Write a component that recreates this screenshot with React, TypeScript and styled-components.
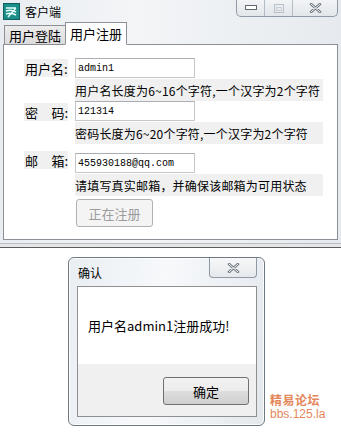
import React from 'react'
import styled, {createGlobalStyle} from 'styled-components'

const GlobalStyle = createGlobalStyle`
    html, body {
        margin: 0;
        padding: 0;
        background: #ffffff;
    }
    body {
        width: 341px;
        height: 432px;
        overflow: hidden;
        font-family: "Noto Sans CJK SC", "Liberation Sans", sans-serif;
        color: #000;
    }
`

const Page = styled.div`
    position: relative;
    width: 341px;
    height: 432px;
    background: #ffffff;
`

const Window = styled.div`
    height: 243px;
    background: linear-gradient(90deg, #e9edf1 0%, #f3f5f7 40%, #e6eaee 100%);
    border-bottom: 1px solid #b9bcc0;
    display: flex;
    flex-direction: column;
`

const TitleBar = styled.div`
    height: 22px;
    display: flex;
    align-items: center;
    padding-left: 3px;
    gap: 5px;
    font-size: 12px;
`

const TitleText = styled.span`
    line-height: 1;
    margin-top: 2px;
`

const CaptionGroup = styled.div`
    margin-left: auto;
    margin-right: 3px;
    align-self: flex-start;
    display: flex;
    height: 16px;
    border: 1px solid #8f9aa6;
    border-top: none;
    border-radius: 0 0 5px 5px;
    overflow: hidden;
    background: linear-gradient(#f2f4f6, #e2e6ea);
`

const CaptionButton = styled.div<{w: number}>`
    width: ${p => p.w}px;
    display: flex;
    align-items: center;
    justify-content: center;
    & + & {
        border-left: 1px solid #b4bcc5;
    }
`

const TabStrip = styled.div`
    display: flex;
    align-items: flex-end;
    padding-left: 4px;
    height: 22px;
`

const Tab = styled.div<{active?: boolean}>`
    height: ${p => (p.active ? 21 : 18)}px;
    padding: 0 4px;
    display: flex;
    align-items: center;
    font-size: 13px;
    border: 1px solid #8c8f96;
    border-bottom: ${p => (p.active ? '1px solid #fff' : 'none')};
    background: ${p => (p.active ? '#ffffff' : 'linear-gradient(#ececec, #dcdcdc)')};
    margin-bottom: ${p => (p.active ? -1 : 0)}px;
    margin-left: ${p => (p.active ? -1 : 0)}px;
    position: relative;
    z-index: ${p => (p.active ? 2 : 1)};
`

const Panel = styled.div`
    margin: 0 3px;
    height: 196px;
    border: 1px solid #8c8f96;
    background: #ffffff;
    padding: 13px 0 0 20px;
    box-sizing: border-box;
`

const Form = styled.div`
    display: grid;
    grid-template-columns: 44px auto;
    column-gap: 7px;
    justify-items: start;
`

const Label = styled.div<{mt?: number}>`
    width: 44px;
    height: 18px;
    margin-top: ${p => p.mt || 0}px;
    padding-left: 1px;
    box-sizing: border-box;
    background: #f0f0f0;
    display: flex;
    justify-content: space-between;
    align-items: center;
    font-size: 13px;
    white-space: nowrap;
    align-self: start;
`

const Input = styled.div<{mt?: number}>`
    width: 120px;
    height: 20px;
    margin-top: ${p => p.mt || 0}px;
    box-sizing: border-box;
    border: 1px solid #c5c7cc;
    border-top-color: #abadb3;
    padding: 0 2px;
    display: flex;
    align-items: center;
    font-family: "Liberation Mono", "DejaVu Sans Mono", monospace;
    font-size: 10px;
`

const Hint = styled.div<{mb?: number}>`
    grid-column: 2;
    width: 248px;
    height: 22px;
    margin-top: 1px;
    margin-bottom: ${p => p.mb || 0}px;
    background: #f0f0f0;
    display: flex;
    align-items: center;
    font-size: 12px;
    letter-spacing: 0.2px;
    white-space: nowrap;
`

const DisabledButton = styled.div`
    grid-column: 2;
    margin-top: 3px;
    margin-left: 1px;
    width: 77px;
    height: 28px;
    box-sizing: border-box;
    border: 1px solid #adb2b5;
    border-radius: 3px;
    background: #f4f4f4;
    color: #9c9c9c;
    font-size: 13px;
    display: flex;
    align-items: center;
    justify-content: center;
`

const Divider = styled.div`
    height: 3px;
    background: #e4e6e8;
    border-bottom: 1px solid #5c5c5c;
`

const Dialog = styled.div`
    margin: 9px 0 0 68px;
    width: 197px;
    height: 169px;
    box-sizing: border-box;
    border: 1px solid #6f7780;
    border-radius: 6px;
    background: linear-gradient(100deg, #e9eef3 0%, #f7f9fb 45%, #e3e8ed 100%);
    display: flex;
    flex-direction: column;
    padding: 0 7px 8px 8px;
    box-shadow: 0 0 0 1px rgba(255,255,255,0.8) inset;
`

const DialogHead = styled.div`
    height: 28px;
    display: flex;
    align-items: flex-start;
    font-size: 12px;
`

const DialogTitle = styled.span`
    margin-top: 6px;
    margin-left: 1px;
`

const DialogClose = styled.div`
    margin-left: auto;
    width: 46px;
    height: 19px;
    border: 1px solid #8f9aa6;
    border-top: none;
    border-radius: 0 0 4px 4px;
    background: linear-gradient(#f6f7f8, #e6e9ec);
    display: flex;
    align-items: center;
    justify-content: center;
`

const DialogBody = styled.div`
    flex: 1;
    border: 1px solid #8f8f8f;
    display: flex;
    flex-direction: column;
`

const Message = styled.div`
    height: 77px;
    background: #ffffff;
    display: flex;
    align-items: center;
    padding-left: 10px;
    font-size: 13px;
`

const DialogFooter = styled.div`
    flex: 1;
    background: #f0f0f0;
    display: flex;
    justify-content: flex-end;
    align-items: flex-start;
    padding: 13px 7px 0 0;
`

const OkButton = styled.div`
    width: 86px;
    height: 28px;
    box-sizing: border-box;
    border: 1px solid #707070;
    border-radius: 3px;
    background: linear-gradient(#f2f2f2 0%, #ebebeb 50%, #dddddd 51%, #cfcfcf 100%);
    display: flex;
    align-items: center;
    justify-content: center;
    font-size: 13px;
`

const Watermark = styled.div`
    position: absolute;
    left: 270px;
    top: 395px;
    color: #e4875b;
    line-height: 13px;
    font-family: "Liberation Sans", "Noto Sans CJK SC", sans-serif;
    .cn {
        font-size: 12px;
        font-weight: bold;
        letter-spacing: 0.5px;
    }
    .en {
        font-size: 12px;
    }
`

const AppIcon = () => (
    <svg width="17" height="17" viewBox="0 0 17 17">
        <rect x="0.5" y="0.5" width="16" height="16" fill="#1d8f8a" stroke="#0f5f5c"/>
        <path d="M3 5 H13 M3 8 Q8 6 13 9 M3 11 Q8 9 13 12 M5 14 L13 5" stroke="#e8fffb" strokeWidth="1.5" fill="none"/>
    </svg>
)

const CloseGlyph = () => (
    <svg width="13" height="10" viewBox="0 0 13 10">
        <path d="M2 1 L11 9 M11 1 L2 9" stroke="#6d7680" strokeWidth="2.6" strokeLinecap="round"/>
        <path d="M2 1 L11 9 M11 1 L2 9" stroke="#f7f7f7" strokeWidth="1" strokeLinecap="round"/>
    </svg>
)

const App = () => {
    return (
        <Page>
            <GlobalStyle/>
            <Window>
                <TitleBar>
                    <AppIcon/>
                    <TitleText>客户端</TitleText>
                    <CaptionGroup>
                        <CaptionButton w={27}>
                            <svg width="12" height="6"><rect x="0.5" y="0.5" width="11" height="4" fill="#fff" stroke="#5f6770"/></svg>
                        </CaptionButton>
                        <CaptionButton w={27}>
                            <svg width="10" height="9"><rect x="0.5" y="0.5" width="9" height="8" fill="none" stroke="#b9c0c8"/><rect x="2.5" y="3.5" width="5" height="3" fill="none" stroke="#c9ced4"/></svg>
                        </CaptionButton>
                        <CaptionButton w={44}>
                            <CloseGlyph/>
                        </CaptionButton>
                    </CaptionGroup>
                </TitleBar>
                <TabStrip>
                    <Tab>用户登陆</Tab>
                    <Tab active>用户注册</Tab>
                </TabStrip>
                <Panel>
                    <Form>
                        <Label mt={1}><span>用户名:</span></Label>
                        <Input>admin1</Input>
                        <Hint>用户名长度为6~16个字符,一个汉字为2个字符</Hint>
                        <Label mt={2}><span>密</span><span>码:</span></Label>
                        <Input>121314</Input>
                        <Hint mb={9}>密码长度为6~20个字符,一个汉字为2个字符</Hint>
                        <Label mt={-2}><span>邮</span><span>箱:</span></Label>
                        <Input>455930188@qq.com</Input>
                        <Hint>请填写真实邮箱，并确保该邮箱为可用状态</Hint>
                        <DisabledButton>正在注册</DisabledButton>
                    </Form>
                </Panel>
            </Window>
            <Divider/>
            <Dialog>
                <DialogHead>
                    <DialogTitle>确认</DialogTitle>
                    <DialogClose><CloseGlyph/></DialogClose>
                </DialogHead>
                <DialogBody>
                    <Message>用户名admin1注册成功!</Message>
                    <DialogFooter>
                        <OkButton>确定</OkButton>
                    </DialogFooter>
                </DialogBody>
            </Dialog>
            <Watermark>
                <div className="cn">精易论坛</div>
                <div className="en">bbs.125.la</div>
            </Watermark>
        </Page>
    )
}

export default App
